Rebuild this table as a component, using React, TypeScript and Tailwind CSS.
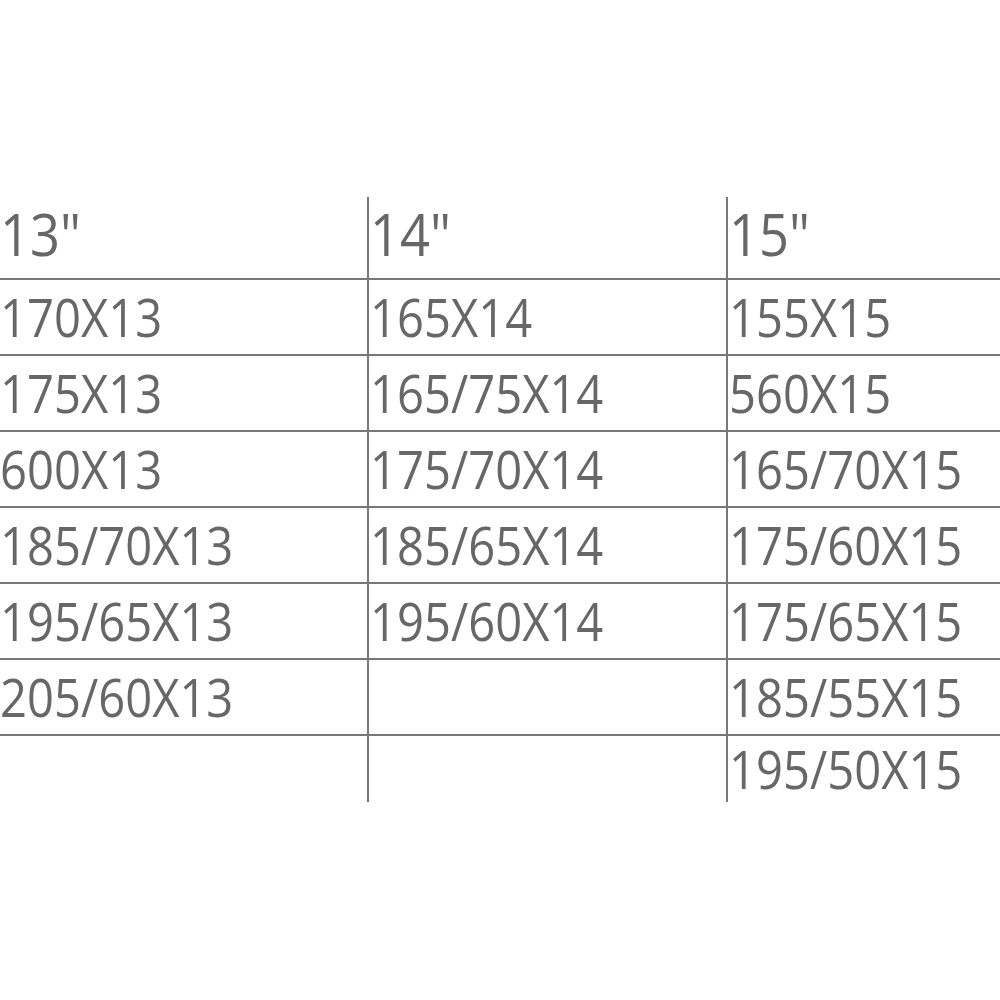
const columns = [
  { label: '13"', sizes: ["170X13", "175X13", "600X13", "185/70X13", "195/65X13", "205/60X13", ""] },
  { label: '14"', sizes: ["165X14", "165/75X14", "175/70X14", "185/65X14", "195/60X14", "", ""] },
  { label: '15"', sizes: ["155X15", "560X15", "165/70X15", "175/60X15", "175/65X15", "185/55X15", "195/50X15"] },
];

const widths = ["w-[369px] pl-[2px]", "w-[359px] pl-[1px]", "flex-1 pl-[1px]"];

function Cell({ col, text, header }: { col: number; text: string; header?: boolean }) {
  return (
    <div className={`${widths[col]} ${col > 0 ? "border-l-2 border-[#777777]" : ""} flex items-center`}>
      <span
        className={`inline-block origin-left scale-x-[0.89] whitespace-nowrap leading-[1.2] ${
          header ? "text-[59px] -mt-[8px]" : "text-[53px]"
        }`}
      >
        {text}
      </span>
    </div>
  );
}

export default function App() {
  const rows = columns[0].sizes.map((_, i) => columns.map(c => c.sizes[i]));

  return (
    <div
      className="w-[1000px] h-[1000px] bg-white text-[#676767] overflow-hidden pt-[197px]"
      style={{ fontFamily: '"Open Sans", "Noto Sans", sans-serif' }}
    >
      <div className="-ml-[2px] w-[1004px]">
        <div className="flex h-[83px] border-b-2 border-[#777777]">
          {columns.map((c, i) => (
            <Cell key={i} col={i} text={c.label} header />
          ))}
        </div>
        {rows.map((r, ri) => (
          <div
            key={ri}
            className={`flex ${ri === rows.length - 1 ? "h-[66px]" : "h-[76px] border-b-2 border-[#777777]"}`}
          >
            {r.map((t, ci) => (
              <Cell key={ci} col={ci} text={t} />
            ))}
          </div>
        ))}
      </div>
    </div>
  );
}
